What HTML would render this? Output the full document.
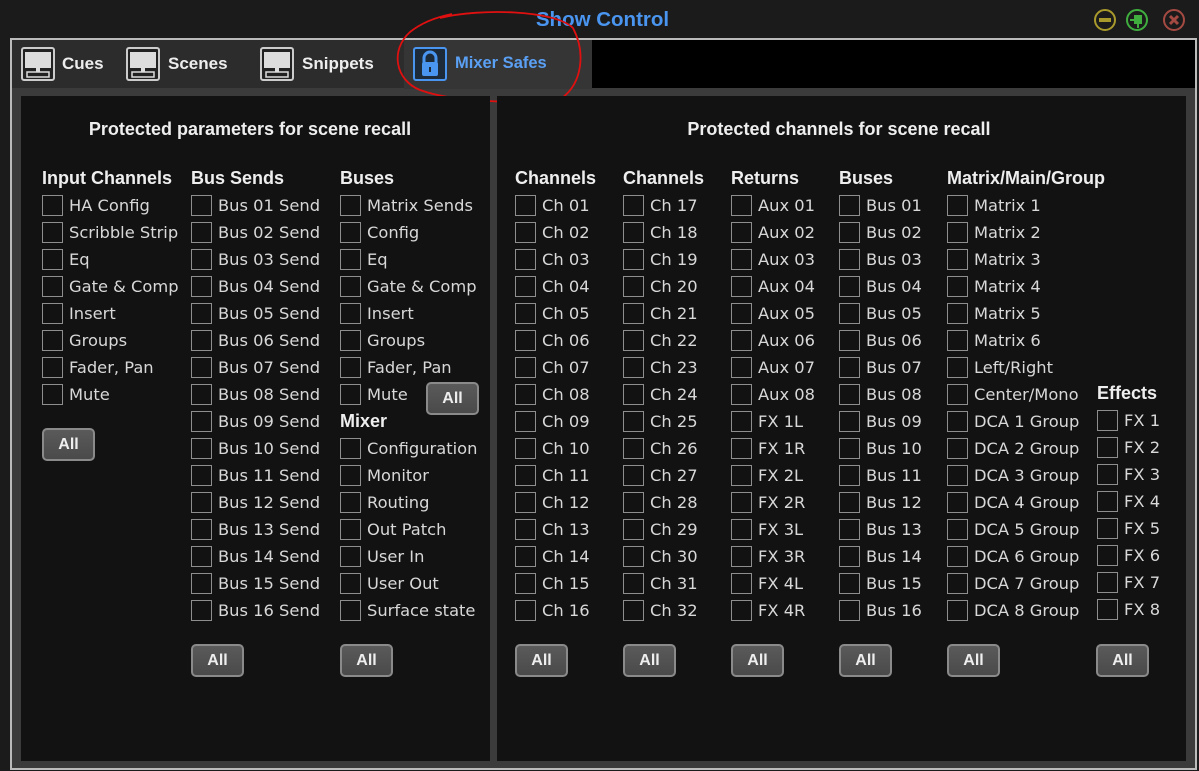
<!DOCTYPE html><html><head><meta charset="utf-8"><style>
*{margin:0;padding:0;box-sizing:border-box}
body{width:1199px;height:771px;background:#1b1b1b;position:relative;overflow:hidden;font-family:"DejaVu Sans","Liberation Sans",sans-serif;color:#ddd}
.abs{position:absolute}
.col{position:absolute;top:165px}
.col div{height:27px;line-height:27px;white-space:nowrap;font-size:16.3px;color:#d8d8d8}
.col div.h{font-family:"Liberation Sans",sans-serif;font-weight:bold;font-size:18px;color:#eee}
.col div.i:before{content:"";display:inline-block;width:19px;height:19px;border:1.5px solid #8e8e8e;vertical-align:middle;margin-right:6px;margin-top:-3px}
.btn{position:absolute;width:53px;height:33px;border:2px solid #8a8a8a;border-radius:5px;background:linear-gradient(#5a5a5a,#4a4a4a);color:#eee;font-family:"Liberation Sans",sans-serif;font-weight:bold;font-size:16px;text-align:center;line-height:29px}
.t{font-family:"Liberation Sans",sans-serif;font-weight:bold;font-size:17px;color:#eee}
.tab{position:absolute;top:47px;width:34px;height:34px;border:2px solid #ccc;border-radius:3px;background:#222}
</style></head><body>
<div class="abs" style="left:0;top:0;width:1199px;height:38px;background:#1b1b1b"></div>
<div class="abs" style="left:0;top:8px;width:1199px;text-align:center;font-family:'Liberation Sans',sans-serif;font-weight:bold;font-size:20.5px;color:#4a95f0;padding-left:6px">Show Control</div>
<svg class="abs" style="left:1090px;top:6px" width="100" height="28">
<circle cx="15" cy="14" r="10" fill="none" stroke="#a99a2c" stroke-width="2"/><rect x="9" y="12" width="12" height="4" fill="#a99a2c"/>
<circle cx="47" cy="14" r="10" fill="none" stroke="#3fae3f" stroke-width="2"/><rect x="44" y="9" width="8" height="9" fill="#3fae3f"/><rect x="40" y="13" width="5" height="2" fill="#3fae3f"/><rect x="47" y="18" width="2" height="4" fill="#3fae3f"/>
<circle cx="84" cy="14" r="10" fill="none" stroke="#a54a42" stroke-width="2"/><path d="M80 10L88 18M88 10L80 18" stroke="#a54a42" stroke-width="3"/>
</svg>
<div class="abs" style="left:10px;top:38px;width:1187px;height:732px;border:2px solid #bbb;background:#3b3b3b"></div>
<div class="abs" style="left:12px;top:40px;width:1183px;height:48px;background:#000"></div>
<div class="abs" style="left:12px;top:40px;width:392px;height:48px;background:#2c2c2c"></div>
<div class="abs" style="left:404px;top:40px;width:188px;height:49px;background:#353535"></div>
<div class="tab" style="left:21px"></div><div class="tab" style="left:126px"></div><div class="tab" style="left:260px"></div>
<svg class="abs" style="left:21px;top:47px" width="300" height="34">
<g><rect x="4" y="5" width="26" height="16" fill="#ddd"/><rect x="15" y="21" width="4" height="4" fill="#ddd"/><rect x="6" y="25" width="22" height="5" fill="none" stroke="#ddd" stroke-width="1.5"/></g>
<g transform="translate(105 0)"><rect x="4" y="5" width="26" height="16" fill="#ddd"/><rect x="15" y="21" width="4" height="4" fill="#ddd"/><rect x="6" y="25" width="22" height="5" fill="none" stroke="#ddd" stroke-width="1.5"/></g>
<g transform="translate(239 0)"><rect x="4" y="5" width="26" height="16" fill="#ddd"/><rect x="15" y="21" width="4" height="4" fill="#ddd"/><rect x="6" y="25" width="22" height="5" fill="none" stroke="#ddd" stroke-width="1.5"/></g>
</svg>
<div class="t abs" style="left:62px;top:54px">Cues</div>
<div class="t abs" style="left:168px;top:54px">Scenes</div>
<div class="t abs" style="left:302px;top:54px">Snippets</div>
<svg class="abs" style="left:413px;top:47px" width="34" height="34"><rect x="1" y="1" width="32" height="32" rx="2" fill="#1c2a3a" stroke="#4a95f0" stroke-width="2"/><path d="M11 16V11a6 6 0 0 1 12 0v5" fill="none" stroke="#4a95f0" stroke-width="3"/><rect x="9" y="15" width="16" height="14" rx="2" fill="#4a95f0"/><rect x="16" y="20" width="2" height="5" fill="#1c2a3a"/></svg>
<div class="t abs" style="left:455px;top:54px;color:#5aa0f5;font-size:16.5px">Mixer Safes</div>
<svg class="abs" style="left:390px;top:8px" width="205" height="100"><path d="M50 10C90 0 165 2 183 20C196 45 192 75 172 90C120 97 60 93 30 82C5 72 0 42 20 24C35 12 52 8 62 6" fill="none" stroke="#e01010" stroke-width="1.8"/></svg>
<div class="abs" style="left:21px;top:96px;width:469px;height:665px;background:#121212"></div>
<div class="abs" style="left:497px;top:96px;width:689px;height:665px;background:#121212"></div>
<div class="t abs" style="left:21px;top:119px;width:458px;text-align:center;font-size:18px">Protected parameters for scene recall</div>
<div class="t abs" style="left:497px;top:119px;width:684px;text-align:center;font-size:18px">Protected channels for scene recall</div>

<div class="col" style="left:42px"><div class="h">Input Channels</div><div class="i">HA Config</div><div class="i">Scribble Strip</div><div class="i">Eq</div><div class="i">Gate &amp; Comp</div><div class="i">Insert</div><div class="i">Groups</div><div class="i">Fader, Pan</div><div class="i">Mute</div></div>
<div class="col" style="left:191px"><div class="h">Bus Sends</div><div class="i">Bus 01 Send</div><div class="i">Bus 02 Send</div><div class="i">Bus 03 Send</div><div class="i">Bus 04 Send</div><div class="i">Bus 05 Send</div><div class="i">Bus 06 Send</div><div class="i">Bus 07 Send</div><div class="i">Bus 08 Send</div><div class="i">Bus 09 Send</div><div class="i">Bus 10 Send</div><div class="i">Bus 11 Send</div><div class="i">Bus 12 Send</div><div class="i">Bus 13 Send</div><div class="i">Bus 14 Send</div><div class="i">Bus 15 Send</div><div class="i">Bus 16 Send</div></div>
<div class="col" style="left:340px"><div class="h">Buses</div><div class="i">Matrix Sends</div><div class="i">Config</div><div class="i">Eq</div><div class="i">Gate &amp; Comp</div><div class="i">Insert</div><div class="i">Groups</div><div class="i">Fader, Pan</div><div class="i">Mute</div><div class="h">Mixer</div><div class="i">Configuration</div><div class="i">Monitor</div><div class="i">Routing</div><div class="i">Out Patch</div><div class="i">User In</div><div class="i">User Out</div><div class="i">Surface state</div></div>
<div class="col" style="left:515px"><div class="h">Channels</div><div class="i">Ch 01</div><div class="i">Ch 02</div><div class="i">Ch 03</div><div class="i">Ch 04</div><div class="i">Ch 05</div><div class="i">Ch 06</div><div class="i">Ch 07</div><div class="i">Ch 08</div><div class="i">Ch 09</div><div class="i">Ch 10</div><div class="i">Ch 11</div><div class="i">Ch 12</div><div class="i">Ch 13</div><div class="i">Ch 14</div><div class="i">Ch 15</div><div class="i">Ch 16</div></div>
<div class="col" style="left:623px"><div class="h">Channels</div><div class="i">Ch 17</div><div class="i">Ch 18</div><div class="i">Ch 19</div><div class="i">Ch 20</div><div class="i">Ch 21</div><div class="i">Ch 22</div><div class="i">Ch 23</div><div class="i">Ch 24</div><div class="i">Ch 25</div><div class="i">Ch 26</div><div class="i">Ch 27</div><div class="i">Ch 28</div><div class="i">Ch 29</div><div class="i">Ch 30</div><div class="i">Ch 31</div><div class="i">Ch 32</div></div>
<div class="col" style="left:731px"><div class="h">Returns</div><div class="i">Aux 01</div><div class="i">Aux 02</div><div class="i">Aux 03</div><div class="i">Aux 04</div><div class="i">Aux 05</div><div class="i">Aux 06</div><div class="i">Aux 07</div><div class="i">Aux 08</div><div class="i">FX 1L</div><div class="i">FX 1R</div><div class="i">FX 2L</div><div class="i">FX 2R</div><div class="i">FX 3L</div><div class="i">FX 3R</div><div class="i">FX 4L</div><div class="i">FX 4R</div></div>
<div class="col" style="left:839px"><div class="h">Buses</div><div class="i">Bus 01</div><div class="i">Bus 02</div><div class="i">Bus 03</div><div class="i">Bus 04</div><div class="i">Bus 05</div><div class="i">Bus 06</div><div class="i">Bus 07</div><div class="i">Bus 08</div><div class="i">Bus 09</div><div class="i">Bus 10</div><div class="i">Bus 11</div><div class="i">Bus 12</div><div class="i">Bus 13</div><div class="i">Bus 14</div><div class="i">Bus 15</div><div class="i">Bus 16</div></div>
<div class="col" style="left:947px"><div class="h">Matrix/Main/Group</div><div class="i">Matrix 1</div><div class="i">Matrix 2</div><div class="i">Matrix 3</div><div class="i">Matrix 4</div><div class="i">Matrix 5</div><div class="i">Matrix 6</div><div class="i">Left/Right</div><div class="i">Center/Mono</div><div class="i">DCA 1 Group</div><div class="i">DCA 2 Group</div><div class="i">DCA 3 Group</div><div class="i">DCA 4 Group</div><div class="i">DCA 5 Group</div><div class="i">DCA 6 Group</div><div class="i">DCA 7 Group</div><div class="i">DCA 8 Group</div></div>
<div class="col" style="left:1097px;top:380px"><div class="h">Effects</div><div class="i">FX 1</div><div class="i">FX 2</div><div class="i">FX 3</div><div class="i">FX 4</div><div class="i">FX 5</div><div class="i">FX 6</div><div class="i">FX 7</div><div class="i">FX 8</div></div>

<div class="btn" style="left:42px;top:428px">All</div>
<div class="btn" style="left:426px;top:382px">All</div>
<div class="btn" style="left:191px;top:644px">All</div>
<div class="btn" style="left:340px;top:644px">All</div>
<div class="btn" style="left:515px;top:644px">All</div>
<div class="btn" style="left:623px;top:644px">All</div>
<div class="btn" style="left:731px;top:644px">All</div>
<div class="btn" style="left:839px;top:644px">All</div>
<div class="btn" style="left:947px;top:644px">All</div>
<div class="btn" style="left:1096px;top:644px">All</div>
</body></html>
